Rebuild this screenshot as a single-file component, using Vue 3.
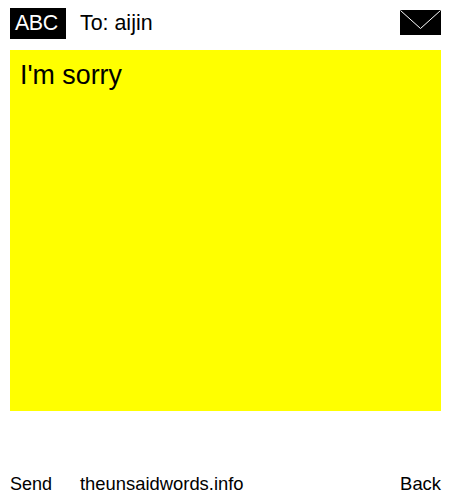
<script setup>
const recipient = 'aijin'
const message = "I'm sorry"
</script>

<template>
  <div class="page">
    <!-- top bar -->
    <div class="top">
      <div class="mode">ABC</div>
      <div class="to">To: {{ recipient }}</div>
      <svg class="mail" viewBox="0 0 41 25" width="41" height="25">
        <rect width="41" height="25" fill="#000" />
        <path d="M0.5 0.5 L20.5 18.5 L40.5 0.5" fill="none" stroke="#fff" stroke-width="1" />
      </svg>
    </div>

    <div class="note">{{ message }}</div>

    <!-- bottom links -->
    <div class="bottom">
      <span class="send">Send</span>
      <span class="site">theunsaidwords.info</span>
      <span class="back">Back</span>
    </div>
  </div>
</template>

<style scoped>
.page {
  width: 450px;
  height: 500px;
  box-sizing: border-box;
  padding: 8px 9px 0 10px;
  display: flex;
  flex-direction: column;
  font-family: "Liberation Sans", Arial, sans-serif;
  color: #000;
  background: #fff;
}
.top {
  display: flex;
  align-items: flex-start;
  height: 31px;
}
.mode {
  width: 56px;
  height: 31px;
  box-sizing: border-box;
  padding-left: 5px;
  background: #000;
  color: #fff;
  font-size: 21.4px;
  letter-spacing: -0.4px;
  line-height: 30px;
}
.to {
  margin-left: 14px;
  font-size: 21.4px;
  line-height: 31px;
}
.mail {
  margin-left: auto;
  margin-top: 2px;
  display: block;
}
.note {
  margin-top: 11px;
  height: 361px;
  box-sizing: border-box;
  padding: 10px;
  background: #ff0;
  font-size: 26.8px;
  line-height: 31px;
}
.bottom {
  margin-top: 62px;
  display: flex;
  font-size: 18.4px;
  line-height: 22px;
}
.send { width: 70px; font-size: 18px; }
.back { margin-left: auto; }
</style>

<style>
html, body { margin: 0; background: #fff; }
</style>
